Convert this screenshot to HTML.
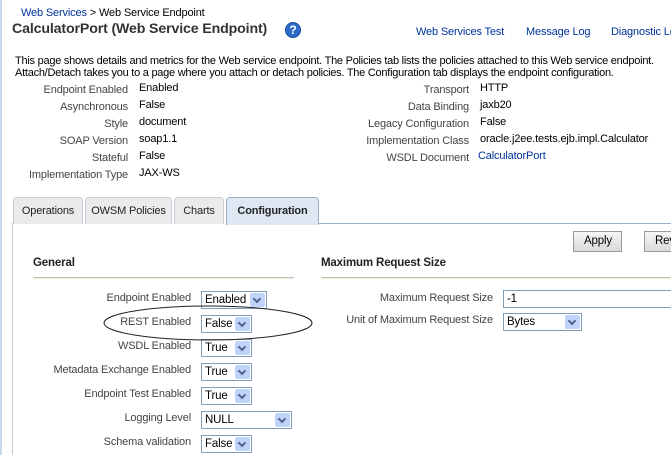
<!DOCTYPE html>
<html><head><meta charset="utf-8"><style>
*{margin:0;padding:0;box-sizing:border-box}
body{width:671px;height:455px;overflow:hidden;background:#fff;position:relative;font-family:"Liberation Sans",Tahoma,sans-serif;font-size:11px;color:#000;letter-spacing:-0.15px}
.a{position:absolute;white-space:nowrap}
.lk{color:#003399}
.lb{color:#444;text-align:right}
.r{position:absolute;white-space:nowrap;text-align:right}
.tab{position:absolute;top:197px;height:27px;border:1px solid #c6cdd6;border-bottom:none;border-radius:4px 4px 0 0;background:#ebebeb;font-size:11px;padding-top:7px;text-align:center;color:#222}
.sel{position:absolute;height:18px;border:1px solid #7f9db9;background:#fff;font-size:11.5px;padding:2px 0 0 3px}
.sel i{position:absolute;right:1px;top:1px;width:15px;height:14px;background:#c1d3fb;border-radius:2px}
.sel i:after{content:"";position:absolute;left:4px;top:3px;width:4px;height:4px;border-right:2px solid #4d6185;border-bottom:2px solid #4d6185;transform:rotate(45deg)}
.btn{position:absolute;top:231px;height:21px;border:1px solid #9a9a9a;background:linear-gradient(#f6f6f6,#d9d9d9);font-size:11.5px;padding:3px 0 0 10px}
</style></head><body>
<div class="a" style="left:0;top:0;width:2px;height:455px;background:#c9d8ec"></div>
<div class="a" style="left:21px;top:7px"><span class="lk">Web Services</span> &gt; Web Service Endpoint</div>
<div class="a" style="left:12px;top:21px;font-size:14.2px;font-weight:bold;color:#333">CalculatorPort (Web Service Endpoint)</div>
<div class="a" style="left:285px;top:22px;width:16px;height:16px;border-radius:50%;background:#2f6bc9;border:1px solid #174a9a;color:#fff;font-weight:bold;font-size:12px;text-align:center;line-height:14px">?</div>
<div class="a lk" style="left:416px;top:26px">Web Services Test</div>
<div class="a lk" style="left:526px;top:26px">Message Log</div>
<div class="a lk" style="left:611px;top:26px">Diagnostic Logs</div>
<div class="a" style="left:15px;top:55px;letter-spacing:-0.25px">This page shows details and metrics for the Web service endpoint. The Policies tab lists the policies attached to this Web service endpoint.</div>
<div class="a" style="left:15px;top:67px;letter-spacing:-0.25px">Attach/Detach takes you to a page where you attach or detach policies. The Configuration tab displays the endpoint configuration.</div>

<div class="r lb" style="right:543px;top:84px">Endpoint Enabled</div><div class="a" style="left:139px;top:82px">Enabled</div>
<div class="r lb" style="right:543px;top:101px">Asynchronous</div><div class="a" style="left:139px;top:99px">False</div>
<div class="r lb" style="right:543px;top:118px">Style</div><div class="a" style="left:139px;top:116px">document</div>
<div class="r lb" style="right:543px;top:135px">SOAP Version</div><div class="a" style="left:139px;top:133px">soap1.1</div>
<div class="r lb" style="right:543px;top:152px">Stateful</div><div class="a" style="left:139px;top:150px">False</div>
<div class="r lb" style="right:543px;top:169px">Implementation Type</div><div class="a" style="left:139px;top:167px">JAX-WS</div>

<div class="r lb" style="right:202px;top:84px">Transport</div><div class="a" style="left:480px;top:82px">HTTP</div>
<div class="r lb" style="right:202px;top:101px">Data Binding</div><div class="a" style="left:480px;top:99px">jaxb20</div>
<div class="r lb" style="right:202px;top:118px">Legacy Configuration</div><div class="a" style="left:480px;top:116px">False</div>
<div class="r lb" style="right:202px;top:135px">Implementation Class</div><div class="a" style="left:480px;top:133px">oracle.j2ee.tests.ejb.impl.Calculator</div>
<div class="r lb" style="right:202px;top:152px">WSDL Document</div><div class="a lk" style="left:478px;top:150px">CalculatorPort</div>

<div class="a" style="left:12px;top:223px;width:1px;height:232px;background:#c6cdd6"></div>
<div class="a" style="left:318px;top:223px;width:353px;height:1px;background:#9aaec6"></div>
<div class="tab" style="left:13px;width:70px">Operations</div>
<div class="tab" style="left:85px;width:87px">OWSM Policies</div>
<div class="tab" style="left:174px;width:50px">Charts</div>
<div class="tab" style="left:226px;width:93px;background:#dde8f3;border-color:#9aaec6;font-weight:bold;height:28px">Configuration</div>

<div class="btn" style="left:573px;width:49px">Apply</div>
<div class="btn" style="left:644px;width:50px">Revert</div>

<div class="a" style="left:33px;top:257px;font-weight:bold;font-size:11.5px;color:#222">General</div>
<div class="a" style="left:33px;top:277px;width:261px;height:2px;border-top:1px solid #c8c2b4;border-bottom:1px solid #eeeae2"></div>
<div class="a" style="left:321px;top:257px;font-weight:bold;font-size:11.5px;color:#222">Maximum Request Size</div>
<div class="a" style="left:321px;top:277px;width:350px;height:2px;border-top:1px solid #c8c2b4;border-bottom:1px solid #eeeae2"></div>

<div class="r lb" style="right:480px;top:292px">Endpoint Enabled</div><div class="sel" style="left:201px;top:291px;width:66px">Enabled<i></i></div>
<div class="r lb" style="right:480px;top:316px">REST Enabled</div><div class="sel" style="left:201px;top:315px;width:51px">False<i></i></div>
<div class="r lb" style="right:480px;top:340px">WSDL Enabled</div><div class="sel" style="left:201px;top:339px;width:51px">True<i></i></div>
<div class="r lb" style="right:480px;top:364px">Metadata Exchange Enabled</div><div class="sel" style="left:201px;top:363px;width:51px">True<i></i></div>
<div class="r lb" style="right:480px;top:388px">Endpoint Test Enabled</div><div class="sel" style="left:201px;top:387px;width:51px">True<i></i></div>
<div class="r lb" style="right:480px;top:412px">Logging Level</div><div class="sel" style="left:201px;top:411px;width:91px">NULL<i></i></div>
<div class="r lb" style="right:480px;top:436px">Schema validation</div><div class="sel" style="left:201px;top:435px;width:51px">False<i></i></div>

<div class="r lb" style="right:178px;top:292px">Maximum Request Size</div>
<div class="sel" style="left:503px;top:290px;width:180px">-1</div>
<div class="r lb" style="right:178px;top:314px">Unit of Maximum Request Size</div>
<div class="sel" style="left:503px;top:313px;width:79px">Bytes<i></i></div>

<svg class="a" style="left:0;top:0" width="671" height="455"><ellipse cx="208" cy="323" rx="104" ry="17" fill="none" stroke="#222" stroke-width="1"/></svg>
</body></html>
